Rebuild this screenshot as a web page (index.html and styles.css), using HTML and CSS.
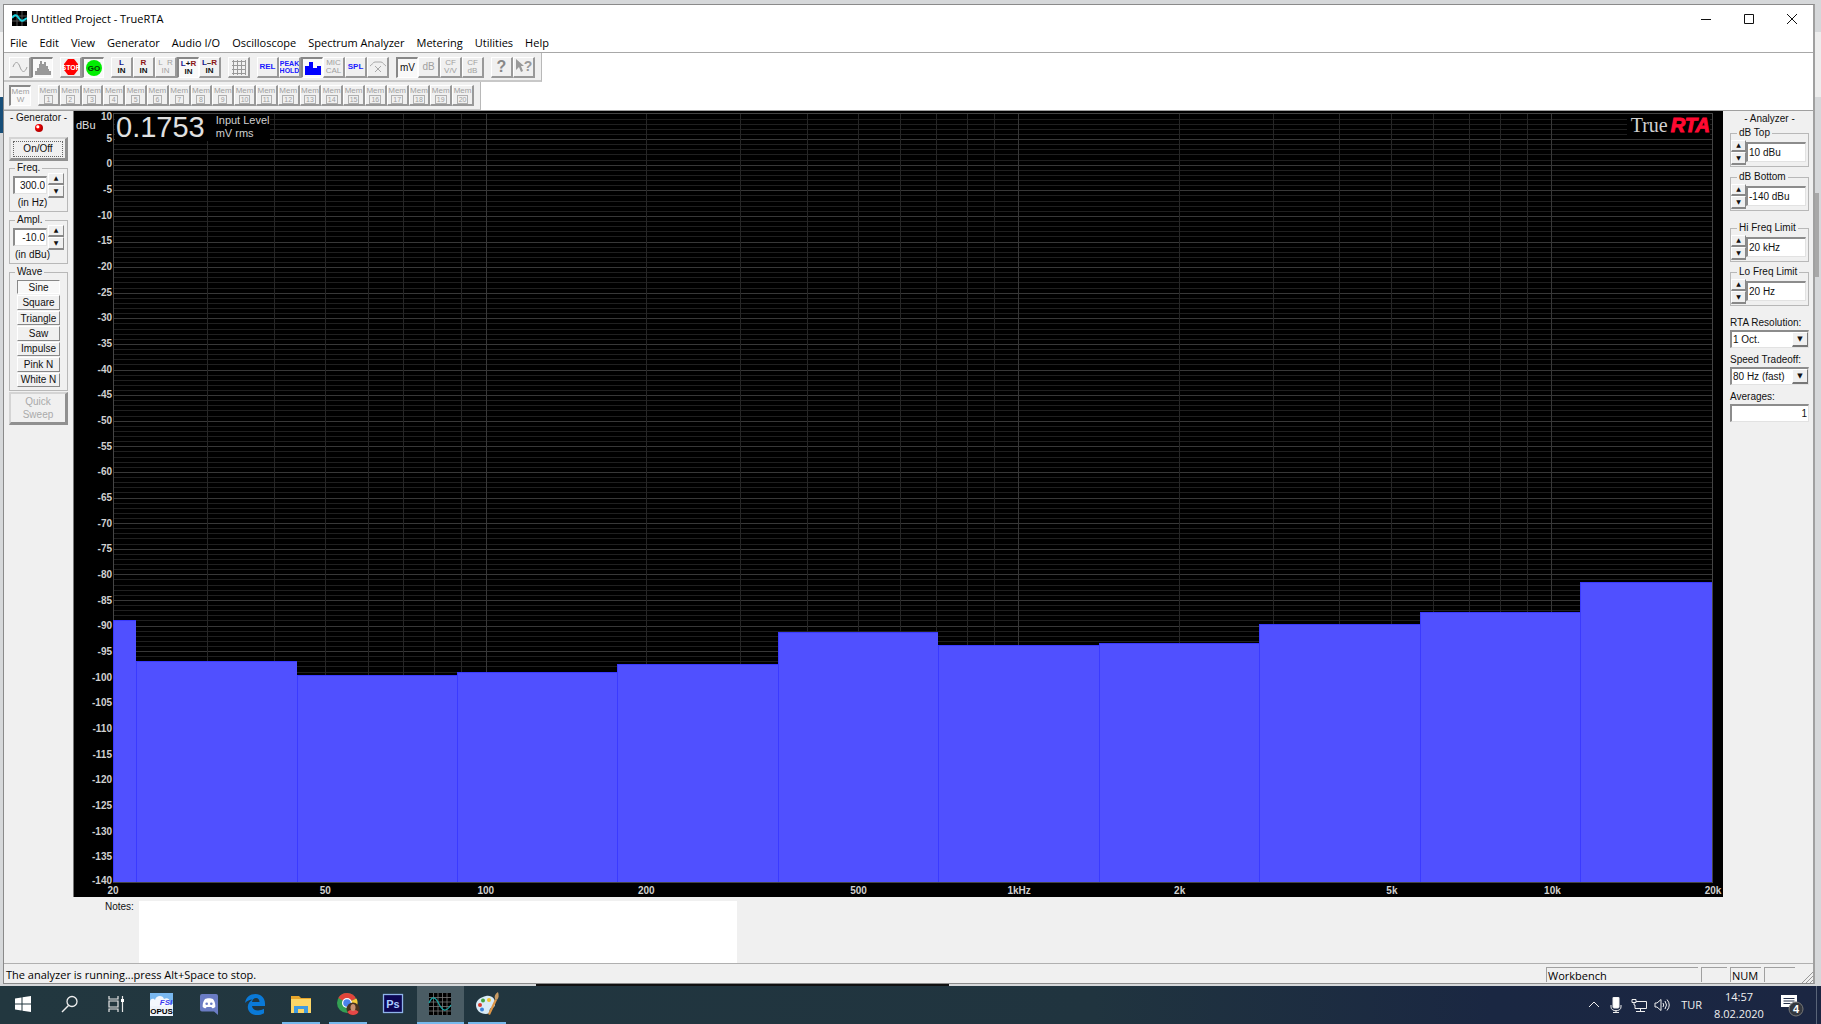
FILE: index.html
```html
<!DOCTYPE html>
<html lang="en">
<head>
<meta charset="utf-8">
<title>Untitled Project - TrueRTA</title>
<link rel="stylesheet" href="styles.css">
</head>
<body>
<div class="desktop">
  <div class="window">
    <header class="titlebar">
      <svg class="app-icon" viewBox="0 0 15 15"><rect width="15" height="15" fill="#000"/><path d="M5 0v15M10 0v15M0 5h15M0 10h15" stroke="#555" fill="none"/><path d="M0 7c2-3 4-4 6-1s4 5 6 3l3-2" stroke="#1fd3e0" stroke-width="2" fill="none"/></svg>
      <h1 class="title">Untitled Project - TrueRTA</h1>
      <button class="win-btn" aria-label="Minimize"><svg viewBox="0 0 10 10"><path d="M0 5.5h10"/></svg></button>
      <button class="win-btn" aria-label="Maximize"><svg viewBox="0 0 10 10"><path d="M.5.5h9v9h-9z"/></svg></button>
      <button class="win-btn" aria-label="Close"><svg viewBox="0 0 10 10"><path d="M0 0l10 10M10 0L0 10"/></svg></button>
    </header>
    <nav class="menubar">
      <button>File</button><button>Edit</button><button>View</button><button>Generator</button><button>Audio I/O</button><button>Oscilloscope</button><button>Spectrum Analyzer</button><button>Metering</button><button>Utilities</button><button>Help</button>
    </nav>

    <div class="toolbar main-tools">
      <div class="group">
        <button class="tool" aria-label="Oscilloscope view"><svg viewBox="0 0 18 18"><path d="M2 9c2-6 5-6 7 0s5 6 7 0" fill="none" stroke="#a0a0a0"/></svg></button>
        <button class="tool on" aria-label="Spectrum view"><svg viewBox="0 0 18 18"><path d="M1 16v-4h2V9h2V5h1V2h2v3h2V3h2v4h2v3h1v2h2v4z" fill="#999"/></svg></button>
      </div>
      <div class="group">
        <button class="tool" aria-label="Stop"><svg viewBox="0 0 18 18"><path d="M6 1h6l4 5v6l-4 5H6l-4-5V6z" fill="#f00"/><text x="9" y="12" class="sign" fill="#fff" font-size="7">STOP</text></svg></button>
        <button class="tool on" aria-label="Go"><svg viewBox="0 0 18 18"><circle cx="9" cy="9" r="8" fill="#0e0"/><text x="9" y="12" class="sign" fill="#043804" font-size="8">GO</text></svg></button>
      </div>
      <div class="group">
        <button class="tool"><b class="left">L</b><b>IN</b></button>
        <button class="tool"><b class="right">R</b><b>IN</b></button>
        <button class="tool off"><span>L&nbsp; R</span><span>IN</span></button>
        <button class="tool on"><b><i class="left">L</i>+<i class="right">R</i></b><b>IN</b></button>
        <button class="tool"><b><i class="left">L</i>–<i class="right">R</i></b><b>IN</b></button>
      </div>
      <div class="group">
        <button class="tool" aria-label="Grid"><svg viewBox="0 0 18 18"><path d="M2 3.5h14M2 7.5h14M2 11.5h14M2 15.500h14M3.500 2v15M7.500 2v15M11.500 2v15M15.500 2v15" stroke="#999" fill="none"/></svg></button>
      </div>
      <div class="group">
        <button class="tool blue"><b>REL</b></button>
        <button class="tool blue tiny"><b>PEAK</b><b>HOLD</b></button>
        <button class="tool on" aria-label="Bars"><svg viewBox="0 0 18 18"><path d="M1 16V7h4V3h4v6h4V7h4v9z" fill="#00f"/></svg></button>
        <button class="tool off"><span>MIC</span><span>CAL</span></button>
        <button class="tool blue"><b>SPL</b></button>
        <button class="tool" aria-label="Average"><svg viewBox="0 0 18 18"><path d="M1 8c2-1 3-4 5-4h6c2 0 3 3 5 4M6 8l6 6M12 8l-6 6" stroke="#a8a8a8" fill="none"/></svg></button>
      </div>
      <div class="group">
        <button class="tool on unit"><span>mV</span></button>
        <button class="tool off unit"><span>dB</span></button>
        <button class="tool off"><span>CF</span><span>V/V</span></button>
        <button class="tool off"><span>CF</span><span>dB</span></button>
      </div>
      <div class="group">
        <button class="tool help"><b>?</b></button>
        <button class="tool" aria-label="Context help"><svg viewBox="0 0 18 18"><path d="M1 1l8 7H6l2 5-2 1-2-5-3 3z" fill="#999"/><text x="13" y="13" class="sign" fill="#999" font-size="14">?</text></svg></button>
      </div>
    </div>

    <div class="toolbar mem-tools">
      <div class="group"><button class="tool on off mem-w"><span>Mem</span><span>W</span></button></div>
      <div class="group mems" id="mems"></div>
    </div>

    <main class="workspace">
      <aside class="panel generator">
        <h2>- Generator -</h2>
        <i class="led"></i>
        <button class="push focus"><span>On/Off</span></button>
        <fieldset>
          <legend>Freq.</legend>
          <div class="spin-row">
            <input class="field num" aria-label="Frequency in Hz" value="300.0">
            <div class="spin"><button aria-label="Up">▲</button><button aria-label="Down">▼</button></div>
          </div>
          <p>(in Hz)</p>
        </fieldset>
        <fieldset>
          <legend>Ampl.</legend>
          <div class="spin-row">
            <input class="field num" aria-label="Amplitude in dBu" value="-10.0">
            <div class="spin"><button aria-label="Up">▲</button><button aria-label="Down">▼</button></div>
          </div>
          <p>(in dBu)</p>
        </fieldset>
        <fieldset class="wave-set">
          <legend>Wave</legend>
          <div class="waves">
            <button class="wave on">Sine</button>
            <button class="wave">Square</button>
            <button class="wave">Triangle</button>
            <button class="wave">Saw</button>
            <button class="wave">Impulse</button>
            <button class="wave">Pink N</button>
            <button class="wave">White N</button>
          </div>
        </fieldset>
        <button class="push sweep" disabled>Quick<br>Sweep</button>
      </aside>

      <section class="center">
        <div class="chart">
          <div class="y-axis" id="yAxis"><span class="unit-label">dBu</span></div>
          <div class="plot">
            <svg class="grid" id="grid"></svg>
            <div class="bars" id="bars"></div>
            <div class="readout"><strong>0.1753</strong><span>Input Level<br>mV rms</span></div>
            <div class="logo">True<em>RTA</em></div>
          </div>
          <div class="x-axis" id="xAxis"></div>
        </div>
        <div class="notes">
          <label for="notes">Notes:</label>
          <textarea id="notes"></textarea>
        </div>
      </section>

      <aside class="panel analyzer">
        <h2>- Analyzer -</h2>
        <fieldset><legend>dB Top</legend>
          <div class="spin-row"><div class="spin"><button aria-label="Up">▲</button><button aria-label="Down">▼</button></div><input class="field" aria-label="dB Top" value="10 dBu"></div>
        </fieldset>
        <fieldset><legend>dB Bottom</legend>
          <div class="spin-row"><div class="spin"><button aria-label="Up">▲</button><button aria-label="Down">▼</button></div><input class="field" aria-label="dB Bottom" value="-140 dBu"></div>
        </fieldset>
        <fieldset class="spaced"><legend>Hi Freq Limit</legend>
          <div class="spin-row"><div class="spin"><button aria-label="Up">▲</button><button aria-label="Down">▼</button></div><input class="field" aria-label="Hi Freq Limit" value="20 kHz"></div>
        </fieldset>
        <fieldset><legend>Lo Freq Limit</legend>
          <div class="spin-row"><div class="spin"><button aria-label="Up">▲</button><button aria-label="Down">▼</button></div><input class="field" aria-label="Lo Freq Limit" value="20 Hz"></div>
        </fieldset>
        <div class="options">
          <label for="res">RTA Resolution:</label>
          <div class="combo"><select id="res"><option>1 Oct.</option></select><i>▼</i></div>
          <label for="speed">Speed Tradeoff:</label>
          <div class="combo"><select id="speed"><option>80 Hz (fast)</option></select><i>▼</i></div>
          <label for="avg">Averages:</label>
          <input class="field num" id="avg" value="1">
        </div>
      </aside>
    </main>

    <footer class="statusbar">
      <span class="message">The analyzer is running...press Alt+Space to stop.</span>
      <span class="pane wide">Workbench</span>
      <span class="pane small"></span>
      <span class="pane">NUM</span>
      <span class="pane"></span>
      <svg class="grip" viewBox="0 0 12 12"><path d="M1 12L12 1M5 12l7-7M9 12l3-3" stroke="#999" fill="none"/></svg>
    </footer>
  </div>
  <div class="backdrop"><i class="page-top"></i><i class="page-bar"></i><i class="page-right"></i><i class="thumb"></i><i class="behind"></i></div>
</div>

<footer class="taskbar">
  <div class="apps">
    <button class="app" aria-label="Start"><svg viewBox="0 0 24 24"><path d="M4 6.500l6.500-1v6H4zM11.500 5.300L20 4v7.500h-8.500zM4 12.500h6.500v6L4 17.600zM11.500 12.500H20V20l-8.500-1.300z" fill="#fff"/></svg></button>
    <button class="app" aria-label="Search"><svg viewBox="0 0 24 24"><circle cx="14" cy="9.500" r="5" fill="none" stroke="#eee" stroke-width="1.300"/><path d="M10.500 13.500L4 20" stroke="#eee" stroke-width="1.500"/></svg></button>
    <button class="app" aria-label="Task View"><svg viewBox="0 0 24 24"><path d="M5 4v3h9V4M5 20v-3h9v3M5 9h9v6H5zM18.500 4v16" fill="none" stroke="#e8e8e8" stroke-width="1.200"/><path d="M17 7h3v3h-3z" fill="#fff"/></svg></button>
    <button class="app" aria-label="FSI Opus"><svg viewBox="0 0 24 24"><rect x="0" y="1" width="23" height="23" fill="#eef3fa"/><path d="M0 1h23v11H0z" fill="#79b8f0"/><path d="M0 10c0-4 4-4 5-2 1-5 8-5 9-1 3-2 6 0 6 3v4H0z" fill="#f4f8fd"/><text x="16" y="13" class="sign" fill="#3a3af0" font-size="8" font-style="italic">FSI</text><text x="11.500" y="22" class="sign" fill="#000" font-size="8">OPUS</text></svg></button>
    <button class="app" aria-label="Discord"><svg viewBox="0 0 24 24"><path d="M5 2h14a2 2 0 0 1 2 2v19l-4-3.500H5a2 2 0 0 1-2-2V4a2 2 0 0 1 2-2z" fill="#6a7cc4"/><path d="M8 7c2-1 6-1 8 0 2 3 2.500 5 2.300 8-1 1-2 1.300-3 1.300l-1-1.300h-4.600l-1 1.300c-1 0-2-.3-3-1.300C5.500 12 6 10 8 7z" fill="#fff"/><circle cx="9.700" cy="11.800" r="1.300" fill="#6a7cc4"/><circle cx="14.300" cy="11.800" r="1.300" fill="#6a7cc4"/></svg></button>
    <button class="app" aria-label="Edge"><svg viewBox="0 0 24 24"><path d="M2 11C3 5 7 2 12.500 2 18 2 22 6 22 11.500V14H9c.3 3 3 4.500 6 4.500 2.200 0 4-.5 6-1.700v4.400C19 22.500 16.500 23 14 23 8.500 23 4.800 19.700 4.800 15c0-3.200 1.800-6 4.800-7.600C6.800 7.500 4 8.500 2 11zm7-1h7.500c0-2.300-1.200-4-3.500-4S9.300 7.700 9 10z" fill="#0a7ad8"/></svg></button>
    <button class="app running" aria-label="File Explorer"><svg viewBox="0 0 24 24"><path d="M2 4h8l2 2h10v15H2z" fill="#e8a62b"/><path d="M2 7h20v14H2z" fill="#fcd667"/><path d="M5 21v-7h14v7h-4v-4H9v4z" fill="#3f9be0"/></svg></button>
    <button class="app running" aria-label="Chrome"><svg viewBox="0 0 24 24"><circle cx="11" cy="11" r="10" fill="#33a053"/><path d="M11 11L2.300 6A10 10 0 0 1 20 6.500z" fill="#e2443a"/><path d="M11 11l9.500-4.500A10 10 0 0 1 12 21z" fill="#f8cb3a"/><circle cx="11" cy="11" r="5" fill="#fff"/><circle cx="11" cy="11" r="3.800" fill="#4a83ea"/><circle cx="17" cy="17" r="6.500" fill="#49331f"/><path d="M11.500 20c2-3 9-3 11 0a6.500 6.500 0 0 1-11 0z" fill="#e54848"/><ellipse cx="17" cy="15.500" rx="2.500" ry="3.500" fill="#c99070"/></svg></button>
    <button class="app" aria-label="Photoshop"><svg viewBox="0 0 24 24"><rect x="1.500" y="2.500" width="19" height="18" fill="#0c0654" stroke="#8fb4ea" stroke-width="1.300"/><text x="11" y="15.500" class="sign" fill="#a9ccff" font-size="11">Ps</text></svg></button>
    <button class="app running active" aria-label="TrueRTA"><svg viewBox="0 0 24 24"><path d="M1 1h22v22H1z" fill="#000"/><path d="M5.500 1v22M10 1v22M14.500 1v22M19 1v22M1 5.500h22M1 10h22M1 14.500h22M1 19h22" stroke="#777" stroke-width=".8" fill="none"/><path d="M1 11c3-7 6-7 10 1s7 8 12 1" fill="none" stroke="#1aa5a5" stroke-width="1.200"/></svg></button>
    <button class="app running" aria-label="Paint"><svg viewBox="0 0 24 24"><path d="M11 4c6-1 10 3 9 9-1 4-4 2-5 4s0 5-4 5C5 22 1 18 1 13s5-8 10-9z" fill="#d8ebf6"/><circle cx="5" cy="13" r="2" fill="#d83a2c"/><circle cx="8" cy="8.500" r="2" fill="#45a33f"/><circle cx="7" cy="17.500" r="2" fill="#3a82d8"/><circle cx="14" cy="8" r="2" fill="#efc12d"/><path d="M13 22l7-15 2 1-7 15z" fill="#dd9648"/><path d="M20 7c-1-3 0-5 3-7 1 3 1 6-1 8z" fill="#c79a63"/></svg></button>
  </div>
  <div class="tray">
    <svg class="chev" viewBox="0 0 12 12"><path d="M1 8l5-5 5 5"/></svg>
    <svg class="mic" viewBox="0 0 12 16"><rect x="3" y="0" width="6" height="11" rx="1" fill="#fff"/><path d="M1 8v2c0 5 10 5 10 0V8M6 13v3M3 15.500h6"/></svg>
    <svg class="net" viewBox="0 0 16 14"><path d="M5 3.500h10.500v7H4V7M1 1.500h4v3H1zM3 4v3h1M9.500 11v2M5 13.500h9"/></svg>
    <svg class="vol" viewBox="0 0 16 14"><path d="M1 5h2l4-3.500v11L3 9H1zM9 5q1.500 2 0 4M11 3q3 4 0 8M13 1.500q4.500 5.500 0 11"/></svg>
    <button class="lang">TUR</button>
    <time class="clock">14:57<br>8.02.2020</time>
    <button class="note" aria-label="Notifications"><svg viewBox="0 0 24 24"><path d="M1 2h16v12h-5l-3 3v-3H1z" fill="#fff"/><path d="M3.500 5.500h11M3.500 8h11M3.500 10.500h7" stroke="#24304a"/><circle cx="16" cy="16" r="7" fill="#34383f" stroke="#777"/><text x="16" y="20" class="sign" fill="#fff" font-size="11">4</text></svg></button>
  </div>
</footer>
<script src="chart.js"></script>
</body>
</html>
```
FILE: chart.js
```js
const TOP_DB = 10, BOTTOM_DB = -140, LOW = 20, HIGH = 20000;
const y = db => (TOP_DB - db) / (TOP_DB - BOTTOM_DB) * 100;
const x = hz => Math.log10(hz / LOW) / Math.log10(HIGH / LOW) * 100;

// Grid: one line per dB, and one per step of each decade
const lines = [];
const line = (x1, y1, x2, y2, kind) =>
  lines.push(`<line x1="${x1}%" y1="${y1}%" x2="${x2}%" y2="${y2}%" class="${kind}"/>`);
for (let db = BOTTOM_DB + 1; db < TOP_DB; db++) {
  line(0, y(db), 100, y(db), db % 5 ? 'minor' : 'major');
}
for (let decade = 10; decade < HIGH; decade *= 10) {
  for (let n = 1; n < 10; n++) {
    const hz = decade * n;
    if (hz > LOW && hz < HIGH) line(x(hz), 0, x(hz), 100, n === 1 ? 'decade' : 'step');
  }
}
document.getElementById('grid').innerHTML = lines.join('');

// Level axis
let labels = '';
for (let db = TOP_DB; db >= BOTTOM_DB; db -= 5) {
  const edge = db === TOP_DB ? ' first' : db === BOTTOM_DB ? ' last' : '';
  labels += `<span class="tick${edge}" style="top:${y(db)}%">${db}</span>`;
}
document.getElementById('yAxis').insertAdjacentHTML('beforeend', labels);

// Frequency axis
const freqs = [[20, '20'], [50, '50'], [100, '100'], [200, '200'], [500, '500'], [1000, '1kHz'],
  [2000, '2k'], [5000, '5k'], [10000, '10k'], [20000, '20k']];
document.getElementById('xAxis').innerHTML =
  freqs.map(([hz, text]) => `<span class="tick" style="left:${x(hz)}%">${text}</span>`).join('');

// Octave bands
const levels = [-88.8, -96.8, -99.5, -98.9, -97.5, -91.1, -93.8, -93.4, -89.7, -87.2, -81.4];
const firstEdge = 31.25 / Math.SQRT2;
document.getElementById('bars').innerHTML = levels.map((db, i) => {
  const from = i ? x(firstEdge * 2 ** (i - 1)) : 0;
  const to = Math.min(100, x(firstEdge * 2 ** i));
  return `<i style="width:${to - from}%;height:${100 - y(db)}%"></i>`;
}).join('');

// Memory buttons
document.getElementById('mems').innerHTML = Array.from({ length: 20 }, (_, i) =>
  `<button class="tool off"><span>Mem</span><span class="box">${i + 1}</span></button>`).join('');
```
FILE: styles.css
```css
* { box-sizing: border-box; }
html, body { margin: 0; }
body {
  min-height: 100vh;
  display: flex;
  flex-direction: column;
  font: 10px/12px "Liberation Sans", Arial, sans-serif;
  color: #111;
  background: #d0d2d4;
}
button, input, select, textarea {
  font: inherit;
  color: inherit;
  margin: 0;
  padding: 0;
  border: 0;
  border-radius: 0;
  background: none;
}
h1, h2, p { margin: 0; font-size: inherit; font-weight: normal; }
.sign { font-family: "Liberation Sans", Arial, sans-serif; font-weight: bold; text-anchor: middle; }

/* Desktop and window */
.desktop {
  position: relative;
  flex: 1;
  display: flex;
  padding: 4px 6px 2px 3px;
  background: #d6d8da;
}
.backdrop i { position: absolute; }
.page-top { left: 0; top: 32px; width: 3px; height: 65px; background: #f2f2f2; }
.page-bar { left: 0; top: 97px; width: 3px; height: 36px; background: #174e78; }
.page-right { right: 0; top: 32px; width: 6px; height: 65px; background: #ededed; }
.thumb { right: 2px; top: 193px; width: 4px; height: 84px; background: #a8a8a8; }
.behind { left: 536px; bottom: 0; width: 413px; height: 2px; background: #111; }
.window {
  flex: 1;
  min-width: 0;
  display: flex;
  flex-direction: column;
  border: 1px solid #8a8a8a;
  border-right: 2px solid #a0a0a0;
  background: #fff;
}
.titlebar, .menubar, .statusbar, .taskbar { font-family: "Open Sans", "Noto Sans", sans-serif; font-size: 11px; }
.titlebar { display: flex; align-items: center; height: 27px; padding-left: 8px; color: #000; }
.app-icon { width: 15px; height: 15px; }
.title { flex: 1; margin-left: 4px; font-size: 11px; }
.win-btn { width: 43px; height: 27px; display: grid; place-items: center; }
.win-btn svg { width: 10px; height: 10px; fill: none; stroke: #111; }
.menubar { display: flex; gap: 12px; height: 21px; padding: 2px 0 0 6px; border-bottom: 1px solid #a8a8a8; }
.menubar button { color: #000; }

/* Toolbars */
.toolbar {
  display: flex;
  gap: 7px;
  align-self: flex-start;
  padding: 4px 6px 2px 5px;
  background: #f0f0f0;
  border-right: 1px solid #b8b8b8;
  border-bottom: 2px solid #c8c8c8;
}
.mem-tools { padding: 3px 6px 3px 5px; border-bottom-width: 1px; }
.group { display: flex; }
.tool {
  width: 22px;
  height: 21px;
  display: flex;
  flex-direction: column;
  align-items: center;
  justify-content: center;
  font-size: 8px;
  line-height: 8px;
  background: #f0f0f0;
  border: 1px solid #fff;
  border-right: 2px solid #999;
  border-bottom: 2px solid #999;
  overflow: hidden;
  white-space: nowrap;
}
.tool.on { background: #f9f9f9; border: 1px solid #fff; border-top: 2px solid #888; border-left: 2px solid #888; }
.tool svg { width: 18px; height: 18px; flex: none; }
.tool i { font-style: normal; }
.tool.off { color: #a0a0a0; }
.tool.blue { color: #1a1aff; }
.tool.tiny { font-size: 7px; line-height: 7px; }
.tool.unit { font-size: 10px; }
.tool.help { font-size: 16px; color: #888; }
.tool .left { color: #15158c; }
.tool .right { color: #8c1515; }
.mems { width: 436px; }
.mems .tool { flex: 1; min-width: 0; }
.box { min-width: 9px; padding: 0 1px; border: 1px solid #b0b0b0; font-size: 7px; line-height: 7px; }

/* Workspace */
.workspace { flex: 1; display: flex; background: #f0f0f0; border-top: 1px solid #a0a0a0; }
.panel { display: flex; flex-direction: column; }
.panel h2 { text-align: center; }
.generator { width: 69px; padding: 1px 5px 0; }
.analyzer { width: 90px; padding: 2px 4px 0 7px; }
fieldset {
  min-width: 0;
  margin: 0;
  padding: 0 3px;
  border: 1px solid #b8b8b8;
}
legend { padding: 0 2px; margin-left: 2px; height: 12px; }
fieldset p { text-align: center; padding-right: 12px; }
.led {
  width: 8px;
  height: 8px;
  margin: 0 auto 5px;
  border-radius: 50%;
  background: radial-gradient(circle at 35% 35%, #fff 0 1px, #f00 2px, #b00 4px);
}
.push {
  height: 24px;
  padding: 2px;
  background: #f0f0f0;
  border: 2px solid #d4d4d4;
  border-right: 3px solid #909090;
  border-bottom: 3px solid #909090;
}
.push.focus { margin-bottom: 1px; }
.focus span { display: block; border: 1px dotted #666; line-height: 14px; }
.push.sweep { height: 33px; padding: 0; line-height: 13px; color: #aaa; }
.spin-row { display: flex; align-items: center; justify-content: space-between; height: 24px; }
.generator fieldset { height: 50px; margin-bottom: 2px; }
.generator .wave-set { height: 125px; margin-bottom: 1px; }
.generator .field { width: 34px; }
.generator .spin-row { margin-top: -1px; }
.field {
  height: 18px;
  min-width: 0;
  padding: 0 1px;
  background: #fff;
  border: 1px solid #e2e2e2;
  border-top: 2px solid #8c8c8c;
  border-left: 2px solid #8c8c8c;
}
.num { text-align: right; }
.spin { width: 16px; height: 25px; display: grid; grid-template-rows: 1fr 1fr; flex: none; }
.spin button {
  font: 6px/8px "DejaVu Sans", sans-serif;
  background: #f0f0f0;
  border: 1px solid #fff;
  border-right-color: #888;
  border-bottom: 2px solid #888;
}
.waves { display: flex; flex-direction: column; gap: 1px; height: 107px; margin: 2px 4px 0; }
.wave {
  flex: 1;
  line-height: 11px;
  background: #f0f0f0;
  border: 1px solid #fff;
  border-right-color: #888;
  border-bottom-color: #888;
}
.wave.on { background: #f8f8f8; border-color: #888 #fff #fff #888; }
.analyzer h2 { margin-bottom: 2px; }
.analyzer fieldset { height: 40px; margin-bottom: 4px; padding: 0 2px 0 0; }
.analyzer legend { margin-left: 6px; }
.analyzer .spaced { margin-top: 7px; }
.analyzer .spin-row { justify-content: flex-start; margin-top: 1px; }
.analyzer .spin { width: 15px; }
.analyzer .spin-row .field { flex: 1; height: 20px; }
.options { display: flex; flex-direction: column; margin-top: 7px; }
.options label { height: 13px; }
.combo { position: relative; margin-bottom: 6px; }
.combo select {
  width: 100%;
  height: 18px;
  display: block;
  appearance: none;
  padding-left: 1px;
  background: #fff;
  border: 1px solid #e2e2e2;
  border-top: 2px solid #8c8c8c;
  border-left: 2px solid #8c8c8c;
}
.combo i {
  position: absolute;
  right: 1px;
  top: 2px;
  width: 16px;
  height: 15px;
  font: normal 7px/13px "DejaVu Sans", sans-serif;
  text-align: center;
  pointer-events: none;
  background: #f0f0f0;
  border: 1px solid #fff;
  border-right-color: #777;
  border-bottom: 2px solid #777;
}

/* Chart */
.center { flex: 1; min-width: 0; display: flex; flex-direction: column; }
.chart {
  flex: 1;
  display: grid;
  grid-template: 1fr 14px / 39px 1fr;
  padding: 2px 10px 0 0;
  background: #000;
  color: #d0d0d0;
  border-left: 1px solid #777;
}
.plot { position: relative; border: 1px solid #444; }
.grid { position: absolute; width: 100%; height: 100%; }
.grid line { shape-rendering: crispEdges; }
.minor { stroke: #202020; }
.major { stroke: #383838; }
.step { stroke: #262626; }
.decade { stroke: #383838; }
.bars { position: absolute; inset: 0 0 0 -1px; display: flex; align-items: flex-end; }
.bars i { background: #5050ff; border-top: 1px solid #3a3aff; border-left: 1px solid #3a3aff; }
.y-axis, .x-axis { position: relative; font-weight: bold; }
.x-axis { grid-column: 2; }
.y-axis .tick { position: absolute; right: 1px; transform: translateY(-50%); }
.y-axis .first { transform: translateY(-20%); }
.y-axis .last { transform: translateY(-70%); }
.x-axis .tick { position: absolute; top: 2px; transform: translateX(-50%); }
.unit-label { position: absolute; left: 2px; top: 6px; font-size: 11px; font-weight: normal; color: #e0e0e0; }
.readout {
  position: absolute;
  left: 1px;
  top: 0;
  display: flex;
  gap: 11px;
  padding-left: 1px;
  line-height: 13px;
  font-size: 11px;
  background: #000;
}
.readout strong { font-size: 29px; line-height: 27px; font-weight: normal; color: #e0e0e0; }
.logo {
  position: absolute;
  right: 2px;
  top: 1px;
  padding-left: 4px;
  font: 20px/21px "Liberation Serif", "Times New Roman", serif;
  background: #000;
}
.logo em { margin-left: 3px; font: italic bold 20px/21px "Liberation Sans", Arial, sans-serif; color: #ff0a32; -webkit-text-stroke: 1px #ff0a32; }
.notes { display: flex; gap: 5px; height: 66px; padding: 4px 0 0 32px; }
.notes textarea { width: 598px; background: #fff; resize: none; }

/* Status bar */
.statusbar {
  display: flex;
  align-items: stretch;
  gap: 3px;
  height: 20px;
  padding: 3px 0 1px 2px;
  line-height: 16px;
  color: #000;
  background: #f0f0f0;
  border-top: 1px solid #b0b0b0;
}
.message { flex: 1; }
.pane { width: 31px; padding-left: 1px; border-top: 1px solid #a0a0a0; border-left: 1px solid #a0a0a0; line-height: 15px; }
.pane.wide { width: 152px; }
.pane.small { width: 26px; }
.grip { width: 12px; height: 12px; margin: 4px 0 0 3px; }

/* Taskbar */
.taskbar {
  display: flex;
  justify-content: space-between;
  height: 38px;
  color: #f0f0f0;
  background: linear-gradient(90deg, #22373f, #20343f 60%, #1a2742 82%, #1b2642);
}
.apps { display: flex; width: 510px; }
.app { flex: 1; display: grid; place-items: center; border-bottom: 2px solid transparent; }
.app svg { width: 24px; height: 24px; }
.app.running { background: linear-gradient(#76b9ed, #76b9ed) bottom / 38px 2px no-repeat border-box; }
.app.active { background: #4a5c64; border-bottom-color: #76b9ed; }
.tray { display: flex; align-items: center; padding-right: 4px; }
.tray > svg { fill: none; stroke: #eee; height: 16px; }
.chev { width: 12px; }
.mic { width: 12px; margin-left: 10px; }
.net, .vol { width: 16px; }
.net { margin-left: 9px; }
.vol { margin-left: 7px; }
.lang { margin-left: 11px; }
.clock { width: 56px; margin-left: 9px; text-align: center; line-height: 17px; }
.note { width: 50px; height: 38px; display: grid; place-items: center; border-right: 1px solid #596478; }
.note svg { width: 24px; height: 24px; }
```
